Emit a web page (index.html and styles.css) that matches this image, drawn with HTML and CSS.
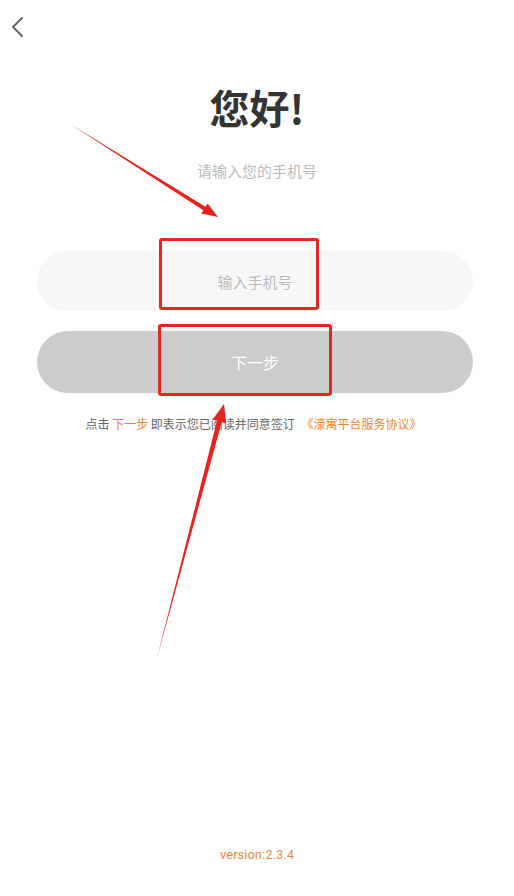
FILE: index.html
```html
<!DOCTYPE html>
<html lang="zh-CN">
<head>
<meta charset="utf-8">
<title>登录</title>
<link rel="stylesheet" href="styles.css">
</head>
<body>
<div class="page">
  <div class="topbar">
    <svg class="back" width="14" height="22" viewBox="0 0 14 22"><path d="M11 2 L2 11 L11 20" fill="none" stroke="#666" stroke-width="2" stroke-linecap="round" stroke-linejoin="round"/></svg>
  </div>
  <h1 class="title">您好!</h1>
  <p class="subtitle">请输入您的手机号</p>
  <div class="form">
    <div class="field"><span class="placeholder">输入手机号</span></div>
    <div class="btn">下一步</div>
  </div>
  <p class="agree">点击 <span class="hl">下一步</span> 即表示您已阅读并同意签订 <span class="hl doc">《濠寓平台服务协议》</span></p>
  <p class="version">version:2.3.4</p>

  <div class="mark mark-input"></div>
  <div class="mark mark-btn"></div>
  <svg class="arrows" width="514" height="896" viewBox="0 0 514 896">
    <polygon fill="#e8231b" points="70,124 205.5,206.8 207.6,203.4 218,217 201.2,213.6 203.3,210.2"/>
    <polygon fill="#e8231b" points="157,658 217,420.8 212.6,419.6 224,404 226.2,423.2 221.8,422"/>
  </svg>
</div>
</body>
</html>
```

FILE: styles.css
```css
* { box-sizing: border-box; }
html, body { margin: 0; padding: 0; background: #fff; }
body { font-family: "Noto Sans CJK SC", "Noto Sans", "Liberation Sans", sans-serif; }
.page {
  position: relative;
  width: 514px;
  height: 896px;
  display: flex;
  flex-direction: column;
  overflow: hidden;
}
.topbar { height: 54px; padding: 16px 0 0 11px; }
.back { display: block; }
.title {
  margin: 29px 0 0;
  text-align: center;
  font-size: 40px;
  line-height: 48px;
  font-weight: 700;
  color: #333;
}
.subtitle {
  margin: 30px 0 0;
  text-align: center;
  font-size: 15px;
  line-height: 20px;
  color: #bbb;
}
.form { padding: 0 41px 0 37px; display: flex; flex-direction: column; }
.field {
  margin-top: 70px;
  height: 60px;
  border-radius: 30px;
  background: #f7f7f7;
  display: flex;
  align-items: center;
  justify-content: center;
}
.placeholder { font-size: 15px; color: #bbb; }
.btn {
  margin-top: 20px;
  height: 62px;
  border-radius: 31px;
  background: #cccccc;
  color: #fff;
  font-size: 16px;
  display: flex;
  align-items: center;
  justify-content: center;
}
.agree {
  margin: 22px 0 0;
  text-align: center;
  font-size: 12px;
  line-height: 18px;
  color: #666;
  padding-right: 7px;
}
.hl { color: #f0862a; }
.doc { margin-left: 4px; }
.version {
  margin: auto 0 0;
  padding-bottom: 32px;
  text-align: center;
  font-size: 13px;
  line-height: 18px;
  color: #ef8a3c;
  font-family: "Roboto", "Noto Sans", sans-serif;
}
.mark {
  position: absolute;
  border: 3px solid #e8261f;
  border-radius: 3px;
}
.mark-input { left: 159px; top: 238px; width: 160px; height: 72px; }
.mark-btn { left: 158px; top: 324px; width: 174px; height: 72px; }
.arrows { position: absolute; left: 0; top: 0; pointer-events: none; }
```
